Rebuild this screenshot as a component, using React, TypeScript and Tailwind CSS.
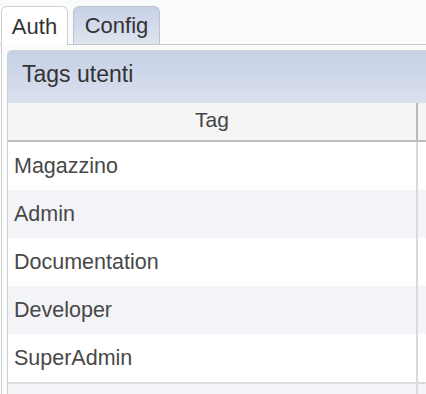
import React from 'react';

const tags = ['Magazzino', 'Admin', 'Documentation', 'Developer', 'SuperAdmin', ''];

export default function App() {
    return (
        <div className="w-[426px] h-[394px] overflow-hidden bg-[#fafbfb] font-['Liberation_Sans',Arial,sans-serif]">
            {/* tab strip */}
            <div className="flex h-[45px] pt-[6px] pl-px gap-[5px] border-b border-[#c9c9c9]">
                <div className="-mb-px w-[67px] flex items-center justify-center bg-white border border-b-0 border-[#cfcfcf] rounded-t-[6px] text-[22px] text-[#333]">
                    Auth
                </div>
                <div className="w-[87px] flex items-center justify-center bg-gradient-to-b from-[#c7d1e7] to-[#dfe4ef] border border-b-0 border-[#bcc3cf] rounded-t-[6px] text-[22px] text-[#333]">
                    Config
                </div>
            </div>

            <div className="ml-px border-l border-[#d0d0d0] pl-[5px] pt-[5px] h-[360px]">
                <div className="w-[470px] border-l border-t border-[#d2d2d2] rounded-tl-[5px] overflow-hidden bg-white">
                    <div className="h-[52px] pt-[9px] pl-[14px] bg-gradient-to-b from-[#c5d0e6] to-[#dbe1ee] text-[23px] leading-[28px] text-[#333]">
                        Tags utenti
                    </div>

                    <div className="flex h-[39px] bg-[#f5f5f5] border-b-2 border-[#bdbdbd]">
                        <div className="w-[410px] flex items-center justify-center pb-[3px] border-r-2 border-[#b9b9b9] text-[21px] text-[#444]">
                            Tag
                        </div>
                        <div className="flex-1" />
                    </div>

                    {tags.map((tag, i) => (
                        <div
                            key={i}
                            className={`flex h-[48px] ${i % 2 === 1 ? 'bg-[#f3f4f8]' : 'bg-white'} ${i === 4 ? 'border-b-2 border-[#dcdcdc] h-[50px]' : ''}`}
                        >
                            <div className="w-[410px] flex items-center pl-[6px] border-r-2 border-[#dadada] text-[21.5px] text-[#484848]">
                                {tag}
                            </div>
                            <div className="flex-1" />
                        </div>
                    ))}
                </div>
            </div>
        </div>
    );
}
